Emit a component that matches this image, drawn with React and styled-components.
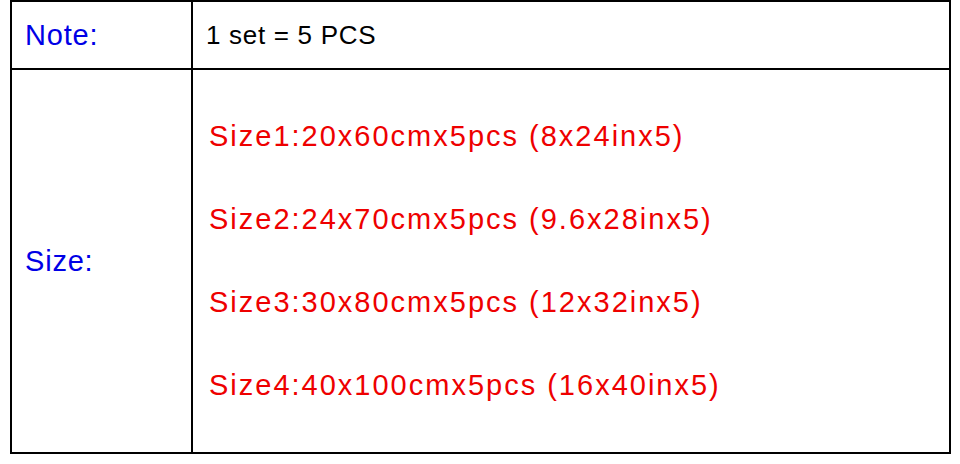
import React from "react";
import styled, { createGlobalStyle } from "styled-components";

const GlobalStyle = createGlobalStyle`
    body {
        margin: 0;
        background: #ffffff;
        font-family: "Liberation Sans", Arial, sans-serif;
    }
`

const Table = styled.div`
    display: grid;
    grid-template-columns: 179px 756px;
    grid-template-rows: 66px 382px;
    gap: 2px;
    padding: 2px;
    margin-left: 10px;
    width: 941px;
    box-sizing: border-box;
    background-color: #000;
`

const Cell = styled.div`
    display: flex;
    flex-direction: column;
    justify-content: center;
    padding-left: ${props => props.$indent || 13}px;
    background-color: #fff;
`

const Label = styled.div`
    font-size: 29px;
    letter-spacing: 0.8px;
    color: #0000e6;
`

const Value = styled.div`
    font-size: 26px;
    letter-spacing: 0.7px;
    color: #000;
`

const SizeLine = styled.div`
    font-size: 29px;
    line-height: 83px;
    letter-spacing: 2px;
    color: #ee0000;
`

const sizes = [
    "Size1:20x60cmx5pcs (8x24inx5)",
    "Size2:24x70cmx5pcs (9.6x28inx5)",
    "Size3:30x80cmx5pcs (12x32inx5)",
    "Size4:40x100cmx5pcs (16x40inx5)",
];

function App() {
    return (
        <>
            <GlobalStyle />
            <Table>
                <Cell>
                    <Label>Note:</Label>
                </Cell>
                <Cell>
                    <Value>1 set = 5 PCS</Value>
                </Cell>
                <Cell>
                    <Label>Size:</Label>
                </Cell>
                <Cell $indent={16}>
                    {sizes.map(s => (
                        <SizeLine key={s}>{s}</SizeLine>
                    ))}
                </Cell>
            </Table>
        </>
    )
}

export default App;
